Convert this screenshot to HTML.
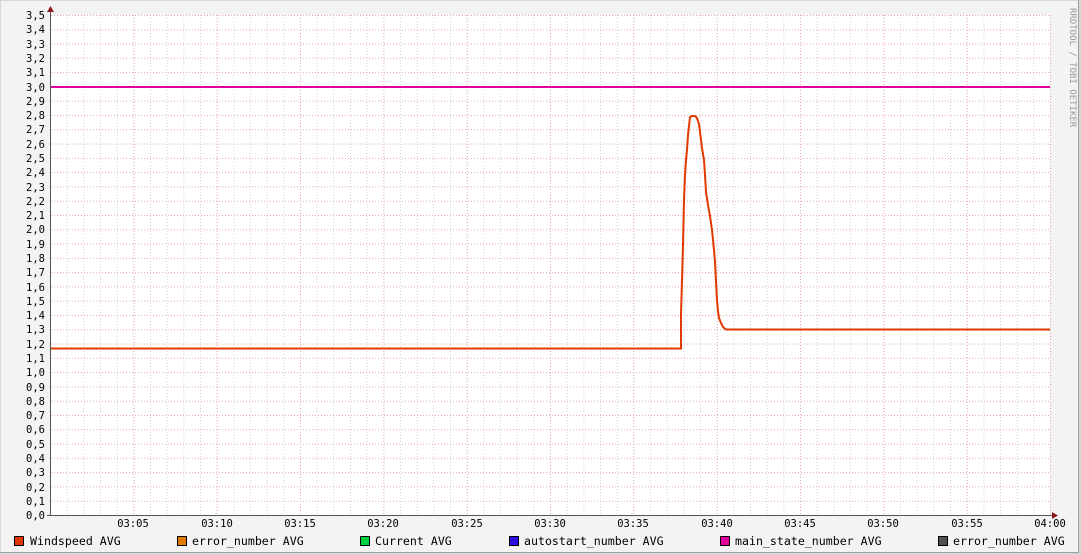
<!DOCTYPE html>
<html><head><meta charset="utf-8"><style>
html,body{margin:0;padding:0;background:#f3f3f3;}
svg{display:block;}
text{font-family:"DejaVu Sans Mono","Liberation Mono",monospace;fill:#000;}
</style></head><body>
<svg width="1081" height="555" viewBox="0 0 1081 555" xmlns="http://www.w3.org/2000/svg">
<defs>
<pattern id="hg" x="0" y="15" width="1000" height="14.2857" patternUnits="userSpaceOnUse">
<line x1="0" y1="0.5" x2="1000" y2="0.5" stroke="#e8a8a8" stroke-width="1" stroke-dasharray="1,2"/>
</pattern>
<pattern id="vg" x="50" y="0" width="16.6667" height="600" patternUnits="userSpaceOnUse">
<line x1="0.5" y1="0" x2="0.5" y2="600" stroke="#d4d4d4" stroke-width="1" stroke-dasharray="1,2"/>
</pattern>
<pattern id="vM" x="50" y="0" width="83.333" height="600" patternUnits="userSpaceOnUse">
<line x1="0.5" y1="0" x2="0.5" y2="600" stroke="#eaa8a8" stroke-width="1" stroke-dasharray="1,2"/>
</pattern>
</defs>
<rect x="0" y="0" width="1081" height="555" fill="#d6d6d6"/>
<rect x="0" y="0" width="1079" height="553" fill="#a0a0a0"/>
<rect x="0" y="0" width="1078" height="552" fill="#d8d8d8"/>
<rect x="1" y="1" width="1077" height="551" fill="#f3f3f3"/>
<rect x="51" y="15" width="999" height="500" fill="#fff"/>
<rect x="51" y="15" width="1000" height="500" fill="url(#vg)"/>
<rect x="51" y="15" width="1000" height="500" fill="url(#vM)"/>
<rect x="51" y="15" width="1000" height="500" fill="url(#hg)"/>
<line x1="50.5" y1="12" x2="50.5" y2="516" stroke="#555" stroke-width="1"/>
<line x1="47" y1="515.5" x2="1052" y2="515.5" stroke="#555" stroke-width="1"/>
<polygon points="47,12 54,12 50.5,6" fill="#8b1a1a"/>
<polygon points="1052,512 1052,519 1058,515.5" fill="#8b1a1a"/>
<line x1="51" y1="87" x2="1050" y2="87" stroke="#dd0099" stroke-width="2"/>
<polyline fill="none" stroke="#e03a00" stroke-width="2" points="51,348.5 681,348.5 681,314 682,280 683,245 684,200 685,175 686,160 687,150 688,135 689,126 690,117 692,116 695,116 697,118 699,124 700,132 701,140 702,148 704,160 705,175 706,192 708,205 710,216 712,230 713,240 714,250 715,262 716,282 717,300 718,311 719,318 721,323 723,327 726,329.5 1050,329.5"/>
<g font-size="10.5" text-anchor="end">
<text x="45" y="19">3,5</text><text x="45" y="33">3,4</text><text x="45" y="48">3,3</text><text x="45" y="62">3,2</text><text x="45" y="76">3,1</text><text x="45" y="91">3,0</text><text x="45" y="105">2,9</text><text x="45" y="119">2,8</text><text x="45" y="133">2,7</text><text x="45" y="148">2,6</text><text x="45" y="162">2,5</text><text x="45" y="176">2,4</text><text x="45" y="191">2,3</text><text x="45" y="205">2,2</text><text x="45" y="219">2,1</text><text x="45" y="233">2,0</text><text x="45" y="248">1,9</text><text x="45" y="262">1,8</text><text x="45" y="276">1,7</text><text x="45" y="291">1,6</text><text x="45" y="305">1,5</text><text x="45" y="319">1,4</text><text x="45" y="333">1,3</text><text x="45" y="348">1,2</text><text x="45" y="362">1,1</text><text x="45" y="376">1,0</text><text x="45" y="391">0,9</text><text x="45" y="405">0,8</text><text x="45" y="419">0,7</text><text x="45" y="433">0,6</text><text x="45" y="448">0,5</text><text x="45" y="462">0,4</text><text x="45" y="476">0,3</text><text x="45" y="491">0,2</text><text x="45" y="505">0,1</text><text x="45" y="519">0,0</text>
</g>
<g font-size="10.5" text-anchor="middle">
<text x="133" y="527">03:05</text><text x="217" y="527">03:10</text><text x="300" y="527">03:15</text><text x="383" y="527">03:20</text><text x="467" y="527">03:25</text><text x="550" y="527">03:30</text><text x="633" y="527">03:35</text><text x="717" y="527">03:40</text><text x="800" y="527">03:45</text><text x="883" y="527">03:50</text><text x="967" y="527">03:55</text><text x="1050" y="527">04:00</text>
</g>
<text x="1070" y="8" font-size="9" style="fill:#999" transform="rotate(90 1070 8)">RRDTOOL / TOBI OETIKER</text>
<g font-size="11.6">
<rect x="14.5" y="536.5" width="9" height="9" fill="#e03a00" stroke="#000"/><text x="30" y="545">Windspeed AVG</text>
<rect x="177.5" y="536.5" width="9" height="9" fill="#e07800" stroke="#000"/><text x="192" y="545">error_number AVG</text>
<rect x="360.5" y="536.5" width="9" height="9" fill="#00d040" stroke="#000"/><text x="375" y="545">Current AVG</text>
<rect x="509.5" y="536.5" width="9" height="9" fill="#2a10e0" stroke="#000"/><text x="524" y="545">autostart_number AVG</text>
<rect x="720.5" y="536.5" width="9" height="9" fill="#dd0099" stroke="#000"/><text x="735" y="545">main_state_number AVG</text>
<rect x="938.5" y="536.5" width="9" height="9" fill="#505050" stroke="#000"/><text x="953" y="545">error_number AVG</text>
</g>
</svg>
</body></html>
